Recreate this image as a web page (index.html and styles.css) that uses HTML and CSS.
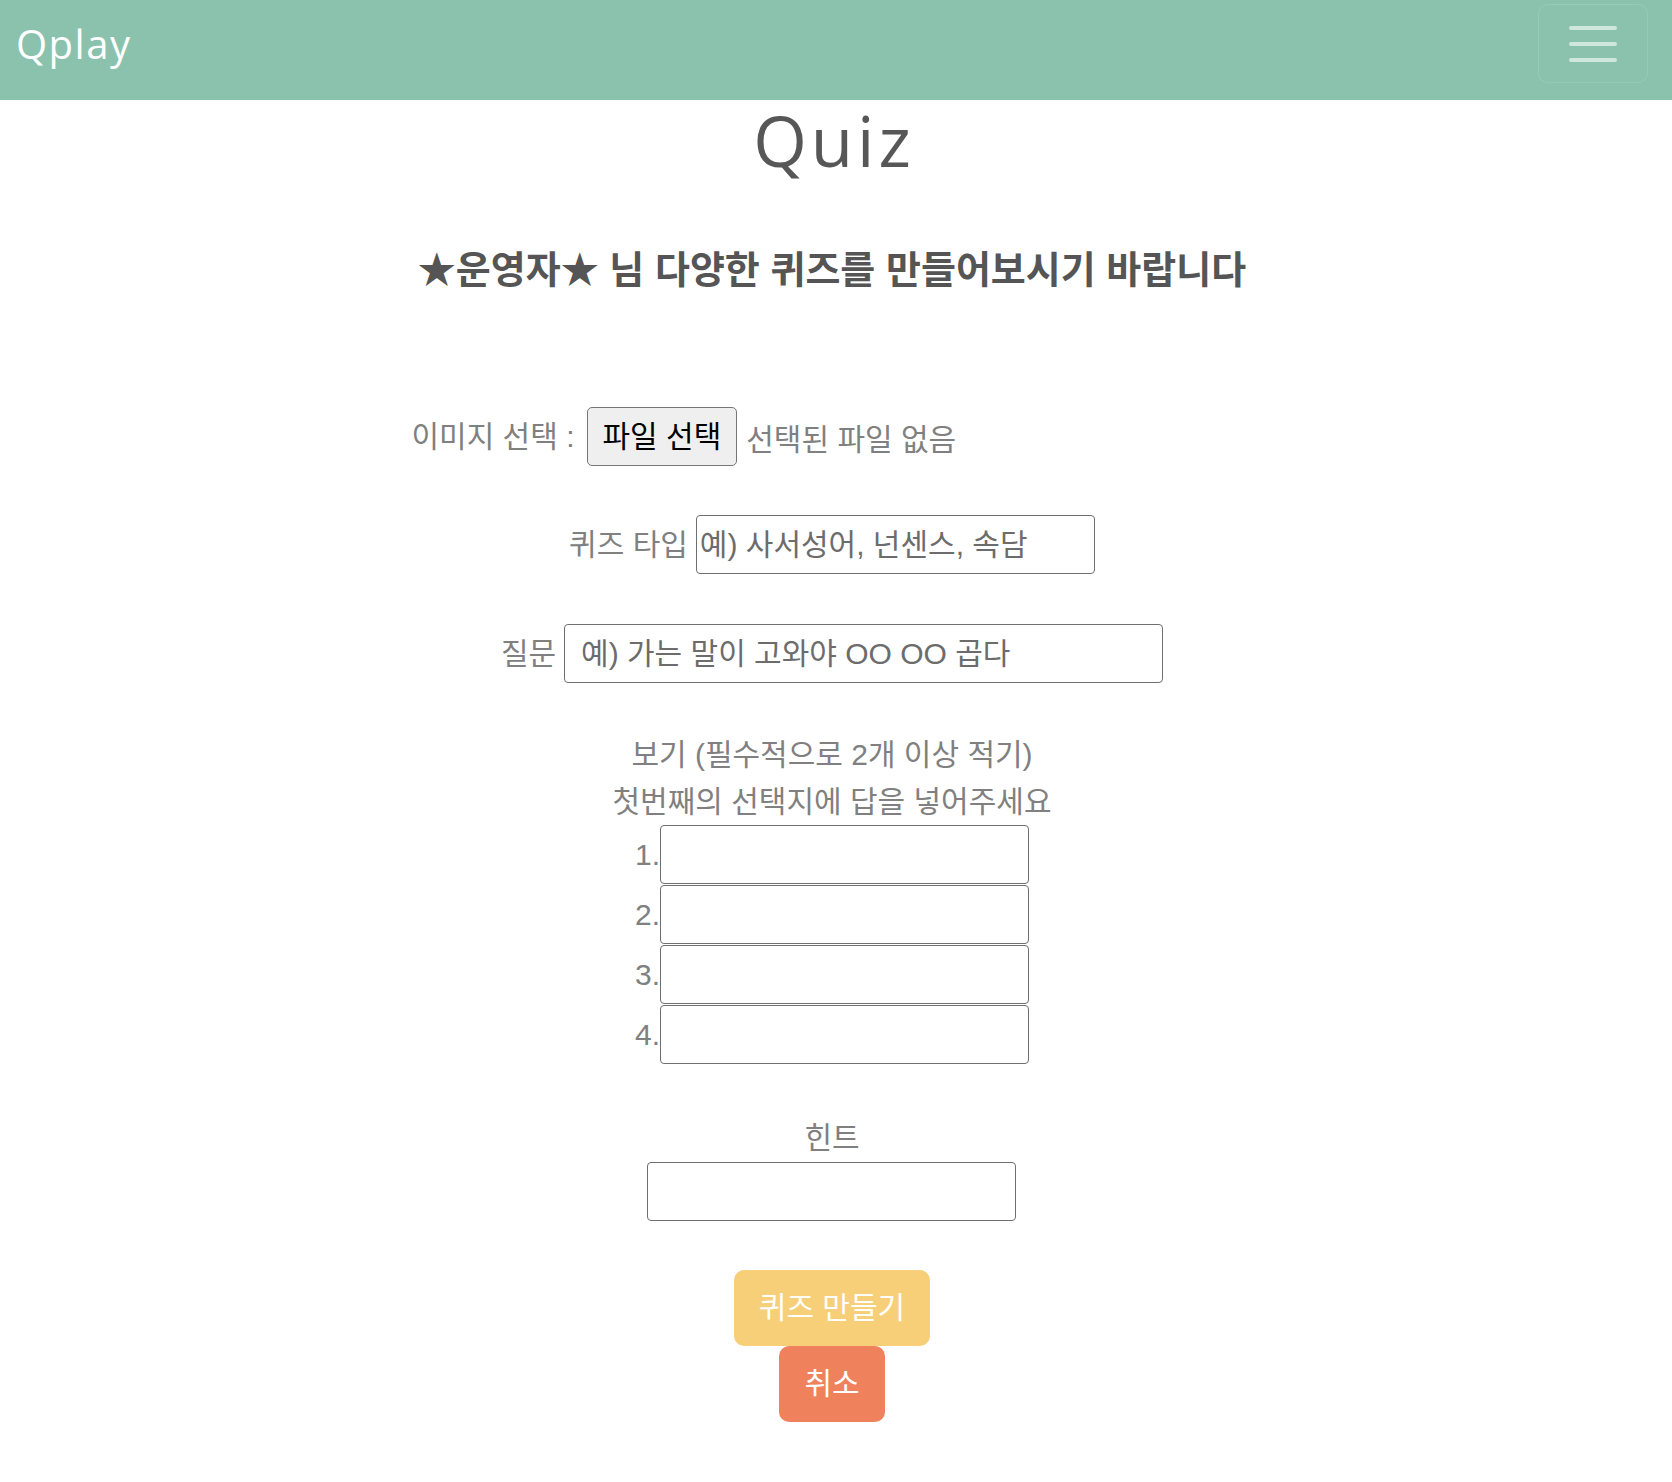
FILE: index.html
```html
<!DOCTYPE html>
<html lang="ko">
<head>
<meta charset="utf-8">
<title>Qplay - Quiz</title>
<link rel="stylesheet" href="styles.css">
</head>
<body>
<nav class="navbar">
  <a class="brand" href="#">Qplay</a>
  <button class="toggler" type="button" aria-label="menu">
    <span class="bar"></span><span class="bar"></span><span class="bar"></span>
  </button>
</nav>
<main class="page">
  <h1 class="title">Quiz</h1>
  <h3 class="subtitle">★운영자★ 님 다양한 퀴즈를 만들어보시기 바랍니다</h3>
  <form class="quiz-form">
    <div class="row file-row">
      <span class="label">이미지 선택 :</span>
      <span class="file-input"><span class="file-btn">파일 선택</span><span class="file-name">선택된 파일 없음</span></span>
    </div>
    <div class="row type-row">
      <label class="label">퀴즈 타입</label>
      <input class="field field-type" type="text" placeholder="예) 사서성어, 넌센스, 속담">
    </div>
    <div class="row question-row">
      <label class="label">질문</label>
      <input class="field field-question" type="text" placeholder="예) 가는 말이 고와야 OO OO 곱다">
    </div>
    <div class="choices-intro">
      <div>보기 (필수적으로 2개 이상 적기)</div>
      <div>첫번째의 선택지에 답을 넣어주세요</div>
    </div>
    <div class="choices">
      <div class="row choice"><label class="label num">1.</label><input class="field field-choice" type="text"></div>
      <div class="row choice"><label class="label num">2.</label><input class="field field-choice" type="text"></div>
      <div class="row choice"><label class="label num">3.</label><input class="field field-choice" type="text"></div>
      <div class="row choice"><label class="label num">4.</label><input class="field field-choice" type="text"></div>
    </div>
    <div class="hint-label">힌트</div>
    <input class="field field-hint" type="text">
    <div class="actions">
      <button class="btn btn-make" type="button">퀴즈 만들기</button>
      <button class="btn btn-cancel" type="button">취소</button>
    </div>
  </form>
</main>
</body>
</html>
```

FILE: styles.css
```css
* { box-sizing: border-box; }
html, body { margin: 0; padding: 0; }
body {
  background: #fff;
  font-family: "Liberation Sans", "Noto Sans CJK KR", sans-serif;
  color: #808080;
}

.navbar {
  display: flex;
  align-items: center;
  justify-content: space-between;
  height: 100px;
  padding: 4px 24px 17px 16px;
  background: #8ac2ad;
}
.brand {
  font-family: "Open Sans", sans-serif;
  font-size: 40px;
  letter-spacing: 1.5px;
  line-height: 1;
  color: #fff;
  text-decoration: none;
}
.toggler {
  width: 110px;
  height: 79px;
  padding: 0;
  border: 1px solid rgba(255, 255, 255, 0.12);
  border-radius: 10px;
  background: transparent;
  display: flex;
  flex-direction: column;
  align-items: center;
  justify-content: center;
  gap: 12px;
}
.bar {
  width: 48px;
  height: 4px;
  border-radius: 2px;
  background: rgba(255, 255, 255, 0.6);
}

.page {
  margin-right: 8px;
  display: flex;
  flex-direction: column;
  align-items: center;
  text-align: center;
}
.title {
  margin: 0;
  padding-left: 4px;
  font-family: "Open Sans", sans-serif;
  font-weight: 500;
  font-size: 69px;
  line-height: 80px;
  letter-spacing: 4px;
  color: #575757;
}
.subtitle {
  margin: 62px 0 0;
  font-family: "Noto Sans CJK KR", sans-serif;
  font-weight: 700;
  font-size: 38px;
  line-height: 50px;
  color: #555;
}

.quiz-form {
  margin-top: 115px;
  display: flex;
  flex-direction: column;
  align-items: center;
}
.row {
  display: flex;
  align-items: center;
  justify-content: center;
}
.label {
  font-size: 30px;
  line-height: 40px;
  color: #808080;
  margin-right: 8px;
  white-space: nowrap;
}
.file-row { height: 59px; }
.file-row .label { margin-right: 12px; }
.file-input {
  width: 666px;
  display: flex;
  align-items: center;
}
.file-btn {
  height: 59px;
  padding: 0 15px;
  border: 1px solid #767676;
  border-radius: 5px;
  background: #efefef;
  color: #000;
  font-size: 30px;
  line-height: 57px;
  white-space: nowrap;
}
.file-name {
  margin-left: 9px;
  font-size: 30px;
  color: #808080;
  white-space: nowrap;
}

.field {
  font: inherit;
  font-size: 30px;
  height: 59px;
  padding: 0 3px;
  border: 1px solid #6f6f6f;
  border-radius: 4px;
  background: #fff;
  color: #333;
}
.field::placeholder { color: #6c6c6c; }

.type-row { margin-top: 49px; }
.field-type { width: 399px; }
.question-row { margin-top: 50px; }
.field-question { width: 599px; padding-left: 16px; }

.choices-intro {
  margin-top: 48px;
  font-size: 30px;
  line-height: 47px;
  color: #808080;
}
.choices {
  display: flex;
  flex-direction: column;
  align-items: center;
  gap: 1px;
}
.choice .label { margin-right: 0; }
.field-choice { width: 369px; }

.hint-label {
  margin-top: 50px;
  font-size: 30px;
  line-height: 47px;
  color: #808080;
}
.field-hint { width: 369px; margin-top: 1px; }

.actions {
  margin-top: 49px;
  display: flex;
  flex-direction: column;
  align-items: center;
}
.btn {
  border: 0;
  border-radius: 10px;
  font: inherit;
  font-size: 30px;
  line-height: 42px;
  padding: 17px 25px;
  color: #fff;
}
.btn-make { background: #f7cf78; }
.btn-cancel { background: #ef825c; }
```
